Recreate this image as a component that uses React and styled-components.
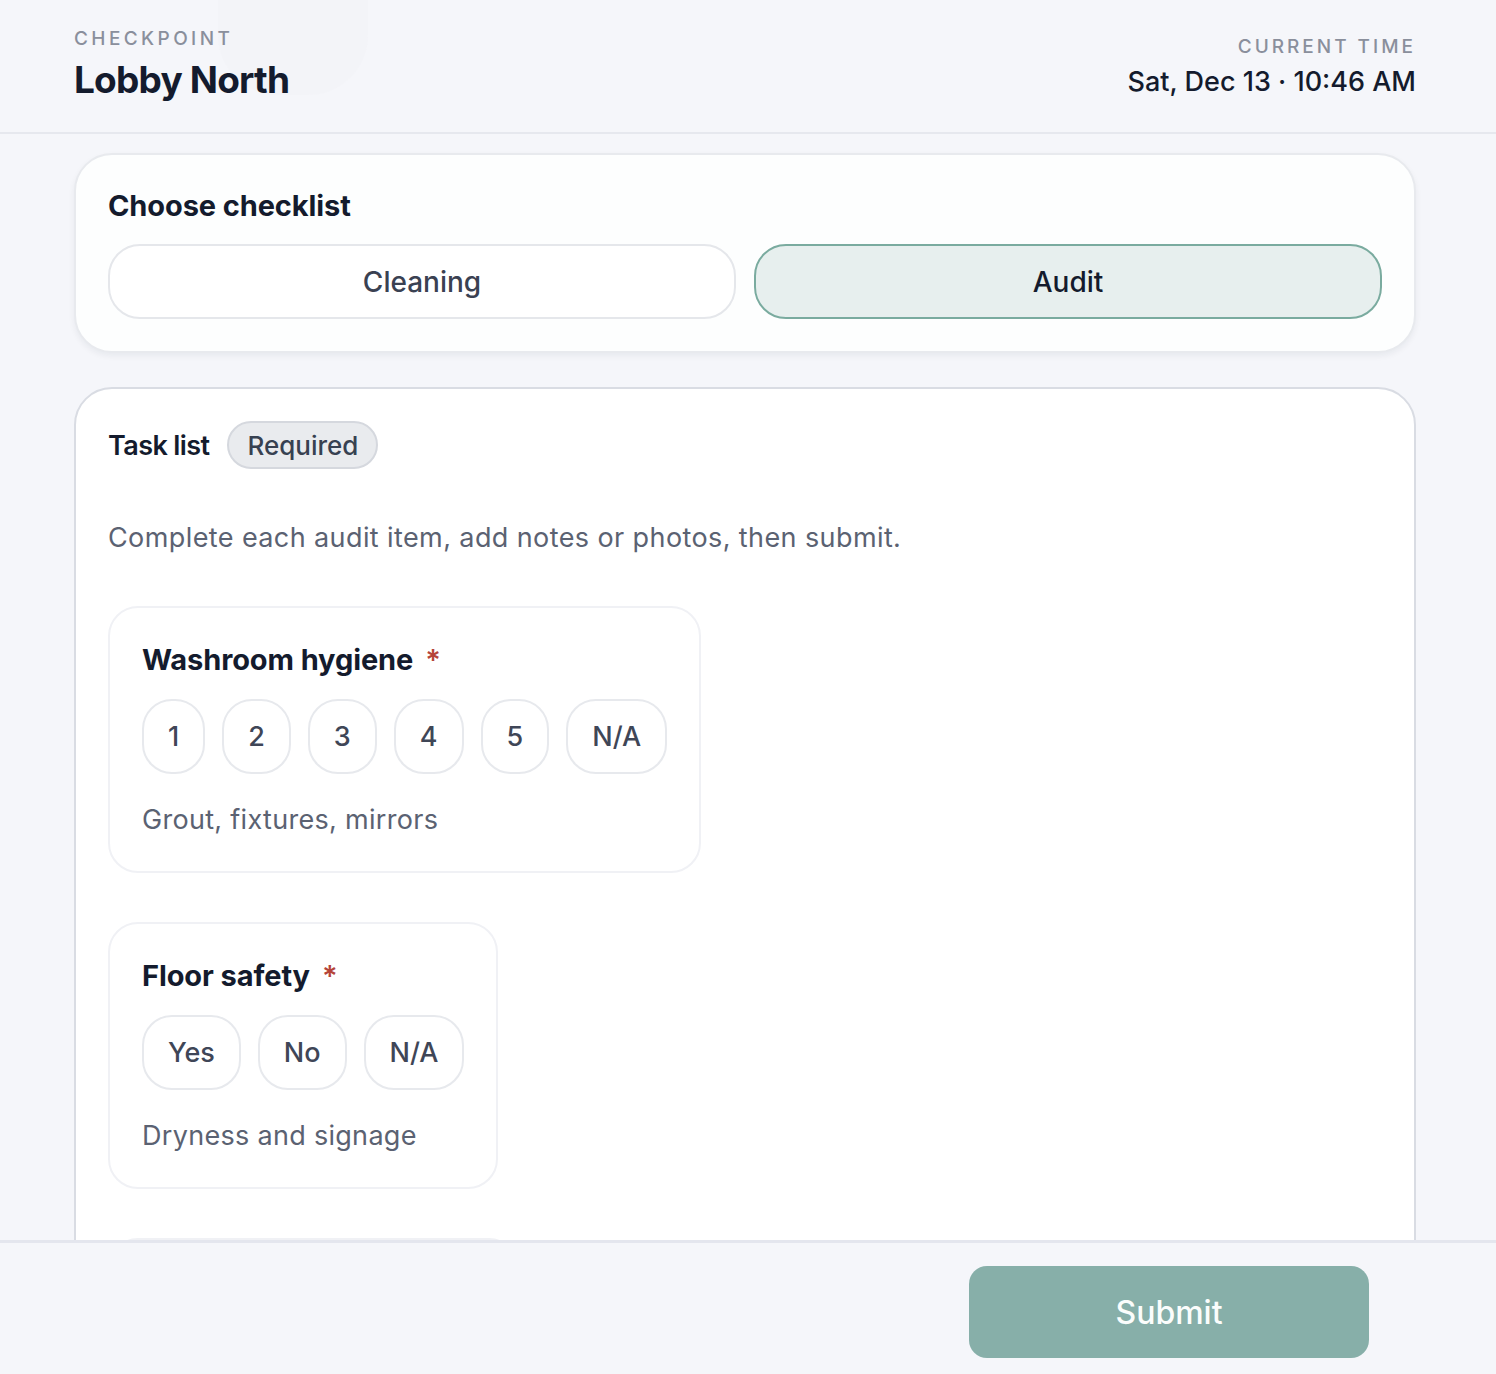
import styled, { createGlobalStyle } from "styled-components";

const GlobalStyle = createGlobalStyle`
    * { box-sizing: border-box; }
    body {
        margin: 0;
        background: #f5f6fa;
        font-family: Inter, "Noto Sans", sans-serif;
        color: #141b2d;
    }
    button { font-family: inherit; }
`;

const Page = styled.div`
    min-height: 100vh;
    padding-bottom: 140px;
`;

const Header = styled.header`
    position: relative;
    height: 134px;
    padding: 25px 80px 0 74px;
    display: flex;
    justify-content: space-between;
    border-bottom: 2px solid #e6e8ee;
    overflow: hidden;
`;

const Blob = styled.div`
    position: absolute;
    left: 218px;
    top: -60px;
    width: 150px;
    height: 155px;
    border-radius: 60px;
    background: #f1f2f7;
    opacity: 0.45;
`;

const HeaderBlock = styled.div`
    position: relative;
    display: flex;
    flex-direction: column;
    align-items: ${(p) => (p.$right ? "flex-end" : "flex-start")};
    padding-top: ${(p) => (p.$right ? "8px" : "0")};
`;

const Eyebrow = styled.span`
    font-size: 19px;
    font-weight: 500;
    letter-spacing: ${(p) => (p.$tight ? "3px" : "3.4px")};
    color: #8a8f9c;
    line-height: 28px;
`;

const Title = styled.h1`
    margin: 4px 0 0;
    font-size: 37px;
    font-weight: 700;
    letter-spacing: -0.8px;
    line-height: 46px;
    color: #141b2d;
`;

const Clock = styled.div`
    margin-top: 3px;
    font-size: 27px;
    font-weight: 500;
    letter-spacing: 0;
    line-height: 36px;
    color: #141b2d;
`;

const Main = styled.main`
    padding: 19px 80px 0 74px;
    display: flex;
    flex-direction: column;
    gap: 34px;
`;

const ChooseCard = styled.section`
    background: #fdfefe;
    border: 2px solid #e8eaee;
    border-radius: 38px;
    box-shadow: 0 3px 6px rgba(20, 27, 45, 0.06);
    padding: 32px 32px 32px;
`;

const CardTitle = styled.h2`
    margin: 0 0 19px;
    font-size: 29px;
    font-weight: 700;
    letter-spacing: -0.1px;
    line-height: 38px;
    color: #141b2d;
`;

const Toggle = styled.div`
    display: grid;
    grid-template-columns: 1fr 1fr;
    gap: 18px;
`;

const ToggleButton = styled.button`
    height: 75px;
    border-radius: 32px;
    border: 2px solid ${(p) => (p.$active ? "#7aab9f" : "#e5e7eb")};
    background: ${(p) => (p.$active ? "#e7efee" : "#ffffff")};
    color: ${(p) => (p.$active ? "#141b2d" : "#3a4152")};
    font-size: 28px;
    font-weight: 500;
    letter-spacing: 0;
    cursor: pointer;
`;

const TaskCard = styled.section`
    background: #ffffff;
    border: 2px solid #d9dce3;
    border-radius: 38px;
    padding: 32px 32px 80px;
    display: flex;
    flex-direction: column;
    gap: 49px;
`;

const TaskHead = styled.div`
    display: flex;
    align-items: center;
    gap: 18px;
`;

const TaskTitle = styled.h2`
    margin: 0;
    font-size: 27px;
    font-weight: 600;
    letter-spacing: -0.6px;
    color: #141b2d;
`;

const Pill = styled.span`
    height: 48px;
    padding: 0 18px;
    display: inline-flex;
    align-items: center;
    border-radius: 24px;
    background: #e9ebee;
    border: 2px solid #d5d8de;
    font-size: 26px;
    font-weight: 500;
    letter-spacing: 0;
    color: #374151;
`;

const Description = styled.p`
    margin: 0;
    font-size: 27px;
    line-height: 39px;
    letter-spacing: 0.4px;
    color: #5b6272;
`;

const Item = styled.div`
    align-self: flex-start;
    border: 2px solid #f0f1f5;
    border-radius: 30px;
    padding: 33px 32px 32px;
    display: flex;
    flex-direction: column;
`;

const ItemTitle = styled.h3`
    margin: 0;
    font-size: 29px;
    font-weight: 700;
    line-height: 37px;
    letter-spacing: -0.1px;
    color: #141b2d;
`;

const Star = styled.span`
    margin-left: 12px;
    color: #b5443a;
    font-weight: 600;
`;

const Options = styled.div`
    margin-top: 21px;
    display: flex;
    gap: 17px;
`;

const Option = styled.button`
    height: 75px;
    padding: 0 24px;
    border-radius: 30px;
    border: 2px solid #e7e9ed;
    background: #ffffff;
    font-size: 27px;
    font-weight: 500;
    color: #3f4657;
    cursor: pointer;
`;

const Hint = styled.p`
    margin: 26px 0 0;
    font-size: 27px;
    line-height: 39px;
    letter-spacing: 0.3px;
    color: #5b6272;
`;

const Footer = styled.footer`
    position: fixed;
    left: 0;
    right: 0;
    bottom: 0;
    height: 134px;
    padding: 23px 127px 0;
    display: flex;
    justify-content: flex-end;
    align-items: flex-start;
    background: #f5f6fa;
    border-top: 3px solid #e4e6ee;
`;

const Submit = styled.button`
    width: 400px;
    height: 92px;
    border: none;
    border-radius: 18px;
    background: #87afa9;
    color: #fbfdfc;
    font-size: 32px;
    font-weight: 500;
    letter-spacing: 0;
    cursor: pointer;
`;

const items = [
    { title: "Washroom hygiene", options: ["1", "2", "3", "4", "5", "N/A"], hint: "Grout, fixtures, mirrors" },
    { title: "Floor safety", options: ["Yes", "No", "N/A"], hint: "Dryness and signage" },
    { title: "Entrance glass", options: ["Yes", "No", "N/A"], hint: "Glass, handles, thresholds" },
];

const App = () => {
    return (
        <Page>
            <GlobalStyle />
            <Header>
                <Blob />
                <HeaderBlock>
                    <Eyebrow>CHECKPOINT</Eyebrow>
                    <Title>Lobby North</Title>
                </HeaderBlock>
                <HeaderBlock $right>
                    <Eyebrow $tight>CURRENT TIME</Eyebrow>
                    <Clock>Sat, Dec 13 · 10:46 AM</Clock>
                </HeaderBlock>
            </Header>

            <Main>
                <ChooseCard>
                    <CardTitle>Choose checklist</CardTitle>
                    <Toggle>
                        <ToggleButton>Cleaning</ToggleButton>
                        <ToggleButton $active>Audit</ToggleButton>
                    </Toggle>
                </ChooseCard>

                <TaskCard>
                    <TaskHead>
                        <TaskTitle>Task list</TaskTitle>
                        <Pill>Required</Pill>
                    </TaskHead>
                    <Description>Complete each audit item, add notes or photos, then submit.</Description>
                    {items.map((item) => (
                        <Item key={item.title}>
                            <ItemTitle>
                                {item.title}
                                <Star>*</Star>
                            </ItemTitle>
                            <Options>
                                {item.options.map((o) => (
                                    <Option key={o}>{o}</Option>
                                ))}
                            </Options>
                            <Hint>{item.hint}</Hint>
                        </Item>
                    ))}
                </TaskCard>
            </Main>

            <Footer>
                <Submit>Submit</Submit>
            </Footer>
        </Page>
    );
};

export default App;
